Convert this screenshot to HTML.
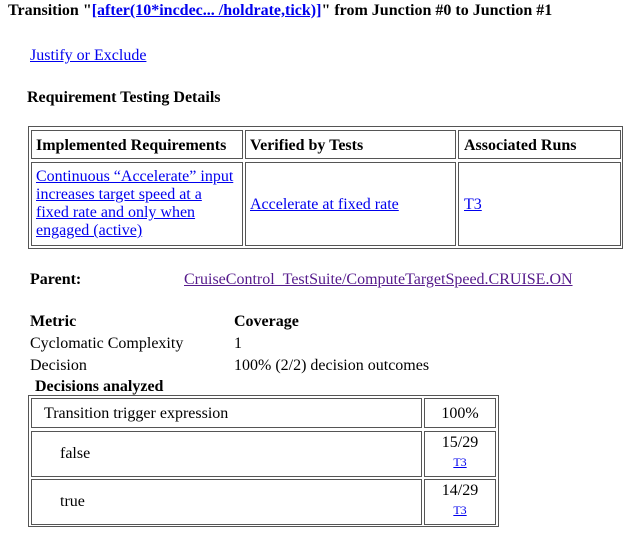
<!DOCTYPE html>
<html><head><style>
body{margin:0;background:#fff;font-family:"Liberation Serif","Times New Roman",Times,"DejaVu Serif",serif;font-size:16px;color:#000;width:639px;height:540px;position:relative;overflow:hidden}
.a{position:absolute;white-space:nowrap;margin-top:1px}
a{color:#0000ee;text-decoration:underline;font-family:inherit}
a.v{color:#551a8b}
.box{position:absolute;border:1px solid #555;box-sizing:border-box}
.c{position:absolute;border:1px solid #555;box-sizing:border-box;}
</style></head><body>
<div class="a" style="left:8px;top:0px;line-height:20px;font-weight:bold">Transition "<a href="#">[after(10*incdec... /holdrate,tick)]</a>" from Junction #0 to Junction #1</div>
<div class="a" style="left:30px;top:45px;line-height:20px"><a href="#">Justify or Exclude</a></div>
<div class="a" style="left:27px;top:87px;line-height:20px;font-weight:bold">Requirement Testing Details</div>

<div class="box" style="left:28px;top:126px;width:595px;height:123px"></div>
<div class="c" style="left:31px;top:130px;width:212px;height:29px"></div>
<div class="c" style="left:245px;top:130px;width:211px;height:29px"></div>
<div class="c" style="left:458px;top:130px;width:163px;height:29px"></div>
<div class="c" style="left:31px;top:162px;width:212px;height:84px"></div>
<div class="c" style="left:245px;top:162px;width:211px;height:84px"></div>
<div class="c" style="left:458px;top:162px;width:163px;height:84px"></div>
<div class="a" style="left:36px;top:135px;line-height:20px;font-weight:bold">Implemented Requirements</div>
<div class="a" style="left:250px;top:135px;line-height:20px;font-weight:bold">Verified by Tests</div>
<div class="a" style="left:464px;top:135px;line-height:20px;font-weight:bold">Associated Runs</div>
<div class="a" style="left:36px;top:167px;line-height:18px"><a href="#">Continuous “Accelerate” input<br>increases target speed at a<br>fixed rate and only when<br>engaged (active)</a></div>
<div class="a" style="left:250px;top:194px;line-height:20px"><a href="#">Accelerate at fixed rate</a></div>
<div class="a" style="left:464px;top:194px;line-height:20px"><a href="#">T3</a></div>

<div class="a" style="left:30px;top:269px;line-height:20px;font-weight:bold">Parent:</div>
<div class="a" style="left:184px;top:269px;line-height:20px"><a class="v" href="#">CruiseControl_TestSuite/ComputeTargetSpeed.CRUISE.ON</a></div>

<div class="a" style="left:30px;top:311px;line-height:20px;font-weight:bold">Metric</div>
<div class="a" style="left:234px;top:311px;line-height:20px;font-weight:bold">Coverage</div>
<div class="a" style="left:30px;top:333px;line-height:20px">Cyclomatic Complexity</div>
<div class="a" style="left:234px;top:333px;line-height:20px">1</div>
<div class="a" style="left:30px;top:355px;line-height:20px">Decision</div>
<div class="a" style="left:234px;top:355px;line-height:20px">100% (2/2) decision outcomes</div>
<div class="a" style="left:35px;top:376px;line-height:20px;font-weight:bold">Decisions analyzed</div>

<div class="box" style="left:28px;top:395px;width:471px;height:132px"></div>
<div class="c" style="left:31px;top:398px;width:391px;height:30px"></div>
<div class="c" style="left:424px;top:398px;width:72px;height:30px"></div>
<div class="c" style="left:31px;top:431px;width:391px;height:46px"></div>
<div class="c" style="left:424px;top:431px;width:72px;height:46px"></div>
<div class="c" style="left:31px;top:479px;width:391px;height:46px"></div>
<div class="c" style="left:424px;top:479px;width:72px;height:46px"></div>
<div class="a" style="left:44px;top:403px;line-height:20px">Transition trigger expression</div>
<div class="a" style="left:424px;width:72px;text-align:center;top:403px;line-height:20px">100%</div>
<div class="a" style="left:60px;top:443px;line-height:20px">false</div>
<div class="a" style="left:424px;width:72px;text-align:center;top:433px;line-height:18px">15/29</div>
<div class="a" style="left:424px;width:72px;text-align:center;top:453px;line-height:16px;font-size:12px"><a href="#">T3</a></div>
<div class="a" style="left:60px;top:491px;line-height:20px">true</div>
<div class="a" style="left:424px;width:72px;text-align:center;top:481px;line-height:18px">14/29</div>
<div class="a" style="left:424px;width:72px;text-align:center;top:501px;line-height:16px;font-size:12px"><a href="#">T3</a></div>
</body></html>
